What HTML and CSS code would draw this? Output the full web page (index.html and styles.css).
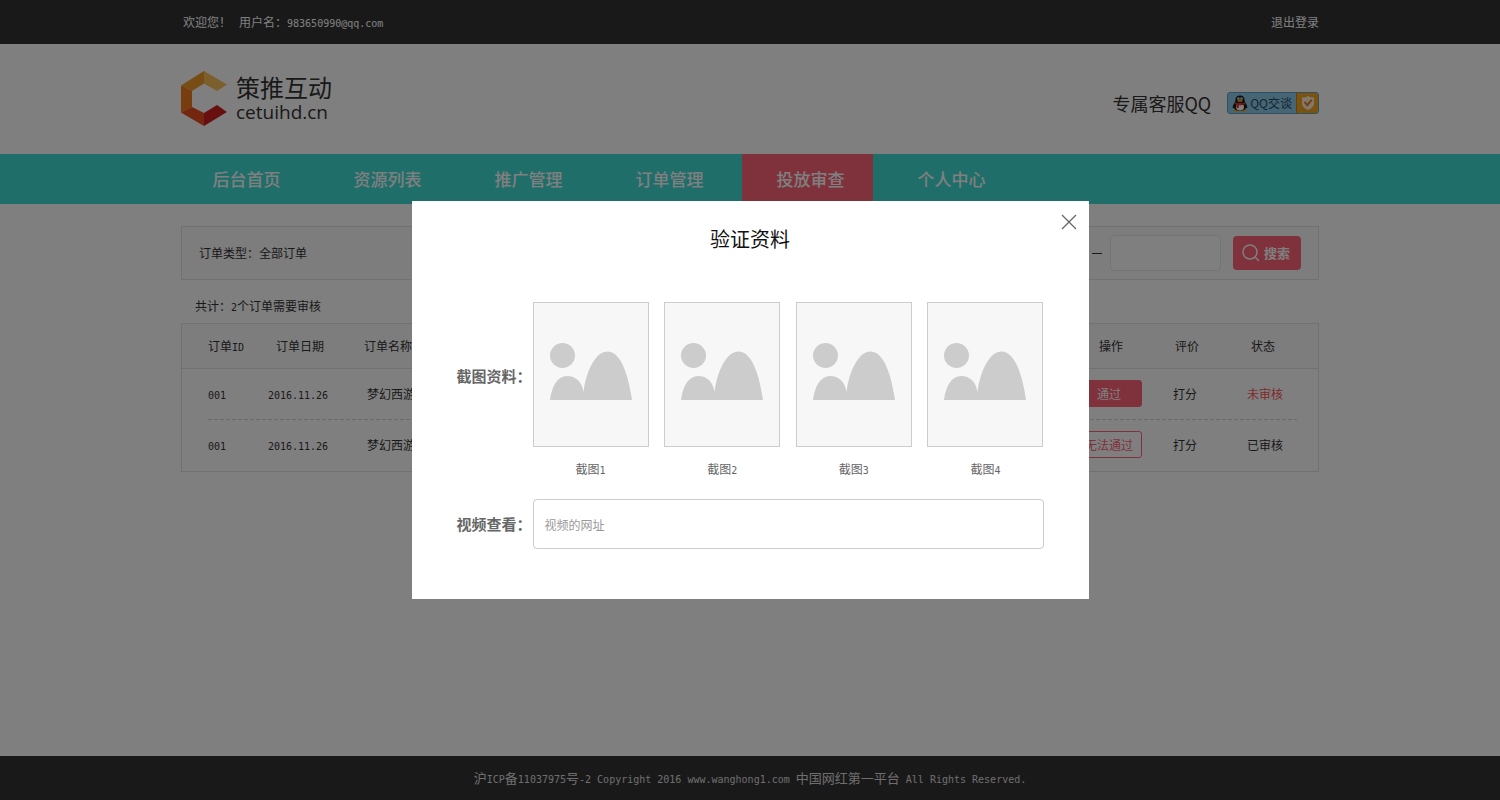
FILE: index.html
```html
<!DOCTYPE html>
<html lang="zh-CN">
<head>
<meta charset="utf-8">
<title>投放审查 - 策推互动</title>
<link rel="stylesheet" href="styles.css">
</head>
<body>
<div class="page">
  <div class="topbar">
    <div class="wrap topbar-inner">
      <p class="welcome">欢迎您！<span class="user">用户名：<span class="latin">983650990@qq.com</span></span></p>
      <a class="logout" href="#">退出登录</a>
    </div>
  </div>

  <header class="header">
    <div class="wrap header-inner">
      <a class="logo" href="#">
        <svg class="logo-mark" width="46" height="56" viewBox="0 0 46 56" aria-hidden="true">
          <path d="M23 0 46 13.500 36 20 23 12.500Z" fill="#f6c05a"/>
          <path d="M23 0V12.500L11 20 0 14.500Z" fill="#ee9a28"/>
          <path d="M0 14.500 11 20V36L0 41.500Z" fill="#f07a1c"/>
          <path d="M0 41.500 11 36 23 42V55Z" fill="#e84e1c"/>
          <path d="M23 42 36 34 46 41 23 55Z" fill="#d01e1e"/>
        </svg>
        <span class="logo-text">
          <span class="logo-name">策推互动</span>
          <span class="logo-domain">cetuihd.cn</span>
        </span>
      </a>
      <div class="service">
        <span class="service-label">专属客服QQ</span>
        <a class="qq" href="#">
          <span class="qq-chat">
            <svg width="16" height="17" viewBox="0 0 16 17" aria-hidden="true">
              <ellipse cx="5" cy="15" rx="3.500" ry="1.600" fill="#f5a31a"/>
              <ellipse cx="11" cy="15" rx="3.500" ry="1.600" fill="#f5a31a"/>
              <path d="M8 .5C5 .5 3.400 2.500 3.400 5.200 3.400 7.500.6 9.800.6 12.400c0 1 .6.900 1.200.2.300 2 2.600 3.200 6.200 3.200s5.900-1.200 6.200-3.200c.6.700 1.200.8 1.200-.2 0-2.600-2.800-4.900-2.800-7.200C12.600 2.500 11 .5 8 .5Z" fill="#1c1c1c"/>
              <ellipse cx="8" cy="12" rx="4" ry="3.400" fill="#fff"/>
              <ellipse cx="6.500" cy="3.700" rx="1.200" ry="1.500" fill="#fff"/>
              <ellipse cx="9.500" cy="3.700" rx="1.200" ry="1.500" fill="#fff"/>
              <circle cx="6.800" cy="3.900" r=".5"/><circle cx="9.200" cy="3.900" r=".5"/>
              <ellipse cx="8" cy="6" rx="2.800" ry=".9" fill="#f5a31a"/>
              <path d="M3.200 7.200C6 8.800 10 8.800 12.800 7.200L13.200 9C11 10.200 9 10.400 7 10.200L6.600 13 4.400 12.700 4.600 9.700 2.700 9Z" fill="#e8322a"/>
            </svg>
            QQ交谈
          </span>
          <span class="qq-check">
            <svg width="12" height="14" viewBox="0 0 12 14" aria-hidden="true">
              <path d="M0 1.500Q4 1.500 6 0 8 1.500 12 1.500V8Q11.500 11.500 6 14 .5 11.500 0 8Z" fill="#fff3dc"/>
              <path d="m2.500 6 2.800 3.200L9.800 3.600" fill="none" stroke="#ee7d1c" stroke-width="2"/>
            </svg>
          </span>
        </a>
      </div>
    </div>
  </header>

  <nav class="nav">
    <div class="nav-inner">
      <a href="#">后台首页</a>
      <a href="#">资源列表</a>
      <a href="#">推广管理</a>
      <a href="#">订单管理</a>
      <a class="active" href="#">投放审查</a>
      <a href="#">个人中心</a>
    </div>
  </nav>

  <main class="wrap main">
    <form class="filter">
      <span class="filter-type">订单类型：全部订单</span>
      <div class="filter-range">
        <input type="text" aria-label="开始日期">
        <span class="dash"></span>
        <input type="text" aria-label="结束日期">
        <button class="search" type="button">
          <svg width="18" height="18" viewBox="0 0 18 18" aria-hidden="true" fill="none" stroke="currentColor" stroke-width="1.500"><circle cx="8" cy="8" r="7"/><path d="m13 13 4 4"/></svg>
          搜索
        </button>
      </div>
    </form>

    <p class="total">共计：<span class="latin">2</span>个订单需要审核</p>

    <table class="orders">
      <colgroup><col class="c-id"><col class="c-date"><col class="c-name"><col><col class="c-action"><col class="c-rate"><col class="c-status"></colgroup>
      <thead>
        <tr><th class="id">订单<span class="latin">ID</span></th><th>订单日期</th><th class="name">订单名称</th><th></th><th>操作</th><th>评价</th><th class="status">状态</th></tr>
      </thead>
      <tbody>
        <tr><td class="id"><span class="latin">001</span></td><td><span class="latin">2016.11.26</span></td><td class="name">梦幻西游</td><td></td><td><button class="tag tag-solid" type="button">通过</button></td><td>打分</td><td class="status pending">未审核</td></tr>
        <tr><td class="id"><span class="latin">001</span></td><td><span class="latin">2016.11.26</span></td><td class="name">梦幻西游</td><td></td><td><button class="tag" type="button">无法通过</button></td><td>打分</td><td class="status">已审核</td></tr>
      </tbody>
    </table>
  </main>

  <footer class="footer">沪<span class="latin">ICP</span>备<span class="latin">11037975</span>号<span class="latin">-2 Copyright 2016 www.wanghong1.com </span>中国网红第一平台<span class="latin"> All Rights Reserved.</span></footer>
</div>

<div class="overlay">
  <section class="modal" role="dialog" aria-modal="true" aria-labelledby="modal-title">
    <button class="close" type="button" aria-label="关闭">
      <svg width="16" height="16" viewBox="0 0 16 16" fill="none" stroke="#666" stroke-width="1.300" aria-hidden="true"><path d="m1 1 14 14M15 1 1 15"/></svg>
    </button>
    <h2 id="modal-title">验证资料</h2>
    <div class="fields">
      <span class="label shots-label">截图资料：</span>
      <div class="shots">
        <figure><svg class="shot" viewBox="0 0 114 143" aria-hidden="true"><use href="#hills"/></svg><figcaption>截图<span class="latin">1</span></figcaption></figure>
        <figure><svg class="shot" viewBox="0 0 114 143" aria-hidden="true"><use href="#hills"/></svg><figcaption>截图<span class="latin">2</span></figcaption></figure>
        <figure><svg class="shot" viewBox="0 0 114 143" aria-hidden="true"><use href="#hills"/></svg><figcaption>截图<span class="latin">3</span></figcaption></figure>
        <figure><svg class="shot" viewBox="0 0 114 143" aria-hidden="true"><use href="#hills"/></svg><figcaption>截图<span class="latin">4</span></figcaption></figure>
      </div>
      <label class="label" for="video">视频查看：</label>
      <input class="video" id="video" type="text" placeholder="视频的网址">
    </div>
  </section>
</div>

<svg class="sprite" aria-hidden="true">
  <symbol id="hills" viewBox="0 0 114 143">
    <circle cx="28.500" cy="52.500" r="12.500" fill="#ccc"/>
    <path d="M16 97C18 82 24 73 33 73 42 73 48 79 49.500 89 53 64 63 48.500 73.500 48.500 84 48.500 93 63 98 97Z" fill="#ccc"/>
  </symbol>
</svg>
</body>
</html>
```

FILE: styles.css
```css
* { box-sizing: border-box; }

body {
  margin: 0;
  font: 12px/20px "Noto Sans CJK SC", sans-serif;
  color: #333;
  background: #fff;
}

a { color: inherit; text-decoration: none; }
p, h2, figure { margin: 0; }
button, input { font: inherit; }
button { cursor: pointer; }

.latin { font-family: "DejaVu Sans Mono", monospace; font-size: 10px; line-height: 1; }

.page { display: flex; flex-direction: column; min-height: 100vh; }
.wrap { width: 100%; max-width: 1138px; margin: 0 auto; }

/* Top bar */
.topbar { background: #333; color: #fff; }
.topbar-inner { display: flex; justify-content: space-between; align-items: center; height: 44px; padding-left: 2px; }
.user { margin-left: 8px; }

/* Header */
.header-inner { display: flex; justify-content: space-between; align-items: center; height: 110px; }
.logo { display: flex; align-items: center; gap: 9px; }
.logo-text { display: flex; flex-direction: column; gap: 2px; color: #333; }
.logo-name { font-size: 24px; line-height: 24px; }
.logo-domain { font: 400 19px/22px "Open Sans", sans-serif; }
.service { display: flex; align-items: center; gap: 16px; padding-top: 8px; }
.service-label { font-size: 18px; }
.qq { display: flex; height: 22px; border: 1px solid #5fa5c6; border-radius: 3px; background: #8fcdea; color: #1f4a66; overflow: hidden; }
.qq-chat { display: flex; align-items: center; gap: 2px; padding: 0 4px; }
.qq-check { display: flex; align-items: center; justify-content: center; width: 22px; background: #f5a623; border-left: 1px solid #d0801a; }

/* Navigation */
.nav { background: #3edcd4; }
.nav-inner { display: flex; gap: 10px; max-width: 1144px; margin: 0 auto; }
.nav a { width: 131px; padding-left: 6px; text-align: center; font-size: 17px; line-height: 50px; font-weight: 500; color: #fff; }
.nav .active { background: #ff6478; }

/* Filter */
.main { flex: 1; padding-top: 22px; }
.filter { display: flex; justify-content: space-between; align-items: center; height: 54px; padding: 0 17px; border: 1px solid #e2e2e2; background: #fafafa; }
.filter-range { display: flex; align-items: center; }
.filter input { width: 111px; height: 36px; border: 1px solid #e8e8e8; border-radius: 4px; background: #fff; }
.dash { width: 10px; height: 1px; margin: 0 8px 0 12px; background: #333; }
.search { display: flex; align-items: center; justify-content: center; gap: 4px; width: 68px; height: 34px; margin-left: 12px; padding: 0 2px 0 0; border: 0; border-radius: 4px; background: #ff6478; color: #fff; font-size: 13px; font-weight: 700; }

.total { padding: 16px 0 7px 14px; }

/* Orders */
.orders { width: 100%; table-layout: fixed; border-collapse: separate; border-spacing: 0; border: 1px solid #e2e2e2; }
.orders th, .orders td { padding: 0; text-align: center; }
.orders th { height: 45px; padding-left: 4px; font-weight: 400; background: #fafafa; border-bottom: 1px solid #e2e2e2; }
.orders td { height: 51px; padding-bottom: 2px; }
.orders tbody tr:first-child { background: repeating-linear-gradient(90deg, #d4d4d4 0 4px, transparent 4px 6px) 26px 100% / calc(100% - 47px) 1px no-repeat; }
.orders .id { padding-left: 26px; text-align: left; }
.orders .name { padding-left: 37px; text-align: left; }
.orders th.name { padding-left: 34px; }
.orders td.status { padding-right: 13px; }
.orders th.status { padding-right: 21px; }
.orders .pending { color: #f55; }
.c-id { width: 84px; }
.c-date { width: 64px; }
.c-name { width: 114px; }
.c-action { width: 72px; }
.c-rate { width: 80px; }
.c-status { width: 93px; }
.tag { width: 66px; height: 27px; padding: 0; border: 1px solid #ff6478; border-radius: 3px; background: #fff; color: #ff6478; }
.tag-solid { background: #ff6478; color: #fff; }

/* Footer */
.footer { background: #333; color: #ddd; text-align: center; font-size: 13px; line-height: 44px; }

/* Dialog */
.overlay { position: fixed; inset: 0; display: flex; align-items: center; justify-content: center; background: rgba(0, 0, 0, .5); }
.modal { position: relative; width: 677px; max-width: 100%; padding: 23px 45px 50px; background: #fff; }
.modal h2 { font-size: 20px; line-height: 30px; font-weight: 400; color: #111; text-align: center; }
.close { position: absolute; top: 13px; right: 12px; display: flex; padding: 0; border: 0; background: none; }
.fields { display: grid; grid-template-columns: 76px 1fr; row-gap: 20px; align-items: center; margin-top: 48px; }
.label { font-size: 15px; font-weight: 700; color: #666; white-space: nowrap; }
.shots-label { padding-bottom: 29px; }
.shots { display: flex; justify-content: space-between; }
.shot { display: block; width: 116px; height: 145px; border: 1px solid #ccc; background: #f7f7f7; }
.shots figcaption { margin-top: 12px; text-align: center; color: #666; }
.video { width: 100%; height: 50px; padding: 0 11px; border: 1px solid #ccc; border-radius: 4px; background: #fff; color: #666; }
.video::placeholder { color: #999; opacity: 1; }

.sprite { position: absolute; width: 0; height: 0; }
```
